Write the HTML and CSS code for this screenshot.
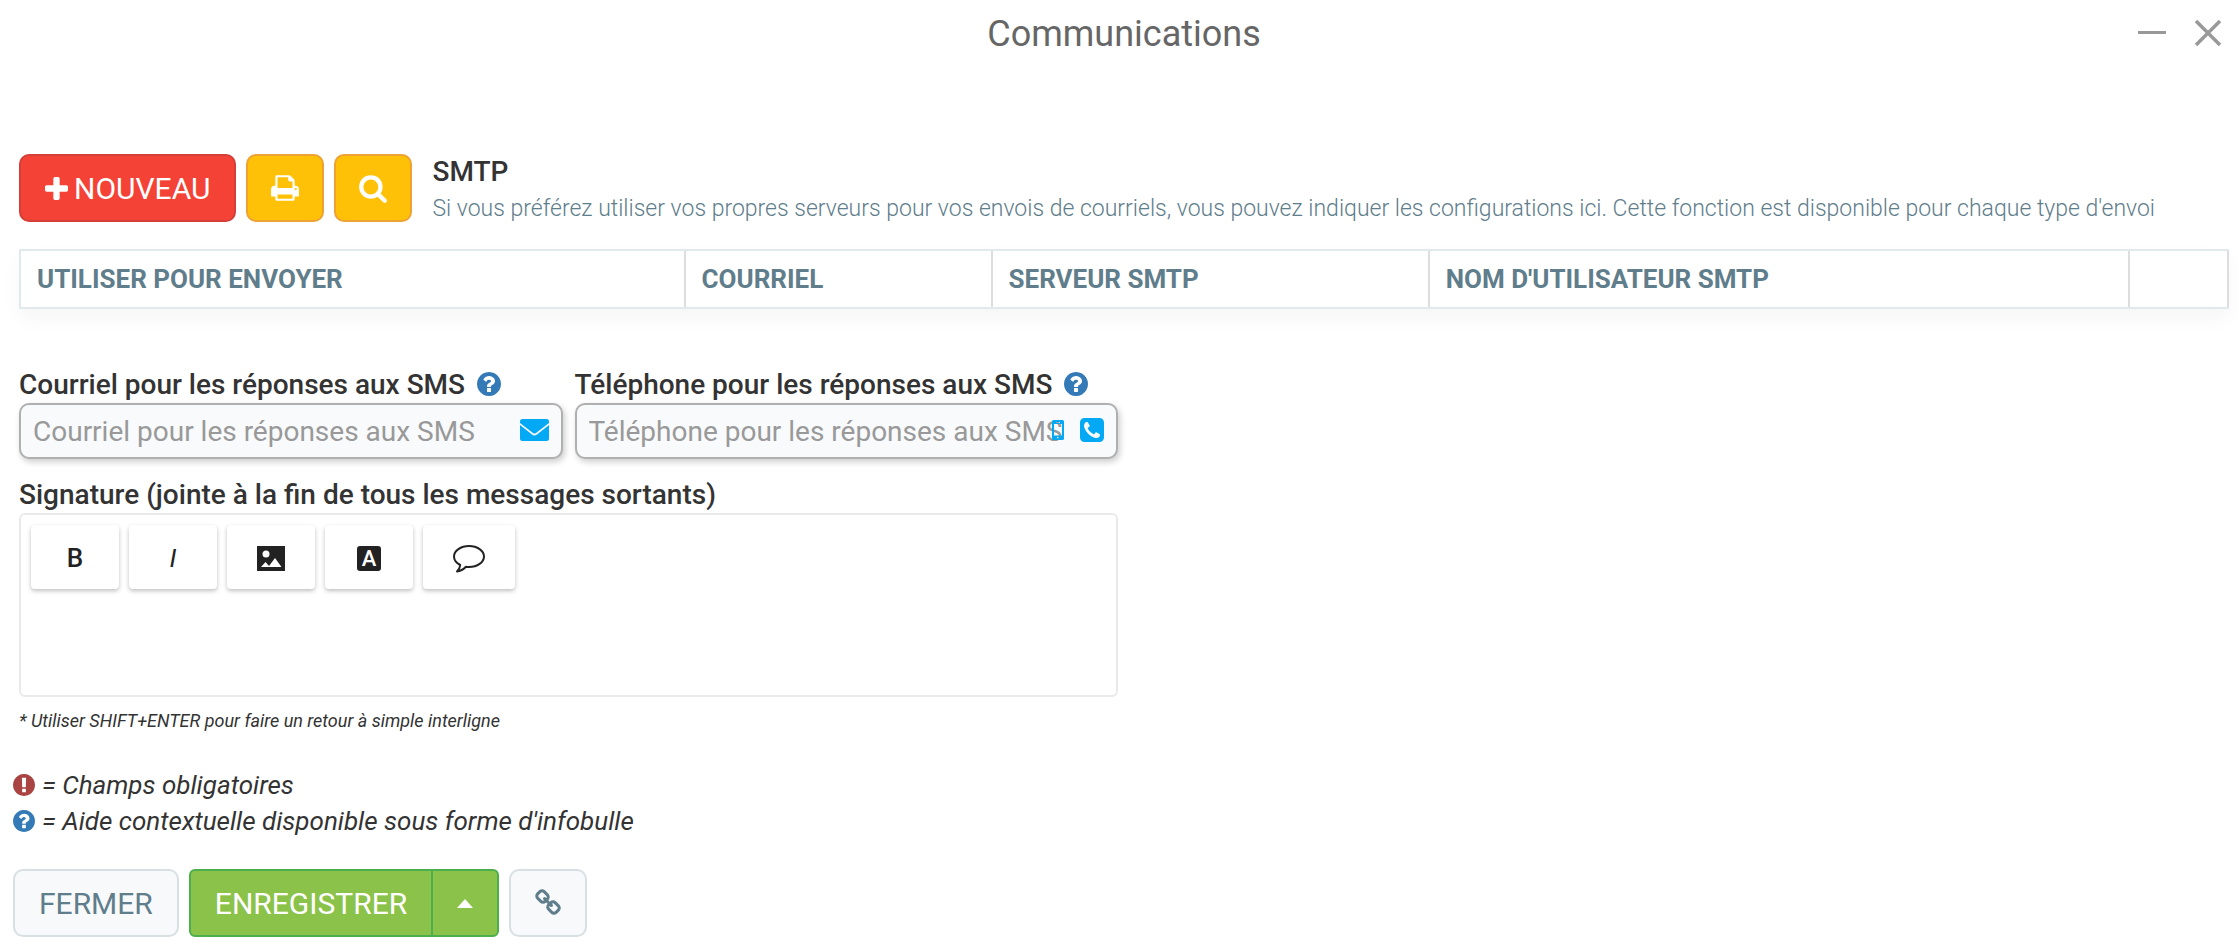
FILE: index.html
```
<!DOCTYPE html>
<html lang="fr">
<head>
  <meta charset="UTF-8">
  <meta name="viewport" content="width=device-width, initial-scale=1.0">
  <title>Communications</title>
  <link rel="stylesheet" href="styles.css">
</head>
<body>
  <svg class="sprite" aria-hidden="true">
    <symbol id="help" viewBox="128 128 1536 1536">
      <path d="M1024 1376v-192q0-14-9-23t-23-9h-192q-14 0-23 9t-9 23v192q0 14 9 23t23 9h192q14 0 23-9t9-23zm256-672q0-88-55.500-163t-138.500-116-170-41q-243 0-371 213-15 24 8 42l132 100q7 6 19 6 16 0 25-12 53-68 86-92 34-24 86-24 48 0 85.500 26t37.500 59q0 38-20 61t-68 45q-63 28-115.500 86.500t-52.500 125.500v36q0 14 9 23t23 9h192q14 0 23-9t9-23q0-19 21.500-49.500t54.500-49.500q32-18 49-28.500t46-35 44.500-48 28-60.500 12.500-81zm384 192q0 209-103 385.500t-279.500 279.500-385.500 103-385.500-103-279.500-279.500-103-385.500 103-385.500 279.500-279.500 385.500-103 385.500 103 279.500 279.500 103 385.500z"/>
    </symbol>
  </svg>

  <header class="titlebar">
    <h1>Communications</h1>
    <div class="window-actions">
      <button type="button" aria-label="Réduire"><svg width="28" height="28" viewBox="0 0 28 28"><path d="M0 12.500h28" stroke="currentColor" stroke-width="3"/></svg></button>
      <button type="button" aria-label="Fermer la fenêtre"><svg width="28" height="28" viewBox="0 0 28 28"><path d="M2 1l24 24M26 1L2 25" stroke="currentColor" stroke-width="3.500"/></svg></button>
    </div>
  </header>

  <main>
    <section class="smtp">
      <div class="smtp-head">
        <button type="button" class="btn btn-red">
          <svg width="23" height="23" viewBox="192 128 1408 1408"><path fill="currentColor" d="M1600 736v192q0 40-28 68t-68 28h-416v416q0 40-28 68t-68 28h-192q-40 0-68-28t-28-68v-416h-416q-40 0-68-28t-28-68v-192q0-40 28-68t68-28h416v-416q0-40 28-68t68-28h192q40 0 68 28t28 68v416h416q40 0 68 28t28 68z"/></svg>
          NOUVEAU
        </button>
        <button type="button" class="btn btn-icon btn-yellow" aria-label="Imprimer">
          <svg width="30" height="30" viewBox="0 0 1792 1792"><path fill="currentColor" d="M448 1536h896v-256h-896v256zm0-640h896v-384h-160q-40 0-68-28t-28-68v-160h-640v640zm1152 64q0-26-19-45t-45-19-45 19-19 45 19 45 45 19 45-19 19-45zm128 0v416q0 13-9.500 22.500t-22.500 9.500h-224v160q0 40-28 68t-68 28h-960q-40 0-68-28t-28-68v-160h-224q-13 0-22.500-9.500t-9.500-22.500v-416q0-79 56.500-135.500t135.500-56.500h64v-544q0-40 28-68t68-28h672q40 0 88 20t76 48l152 152q28 28 48 76t20 88v256h64q79 0 135.500 56.500t56.500 135.500z"/></svg>
        </button>
        <button type="button" class="btn btn-icon btn-yellow" aria-label="Rechercher">
          <svg width="30" height="30" viewBox="0 0 1792 1792"><path fill="currentColor" d="M1216 832q0-185-131.500-316.500t-316.500-131.500-316.500 131.500-131.500 316.500 131.500 316.500 316.500 131.500 316.500-131.500 131.500-316.500zm512 832q0 52-38 90t-90 38q-54 0-90-38l-343-342q-179 124-399 124-143 0-273.500-55.500t-225-150-150-225-55.500-273.500 55.500-273.500 150-225 225-150 273.500-55.500 273.500 55.500 225 150 150 225 55.500 273.500q0 220-124 399l343 343q37 37 37 90z"/></svg>
        </button>
        <div class="smtp-text">
          <h2>SMTP</h2>
          <p>Si vous préférez utiliser vos propres serveurs pour vos envois de courriels, vous pouvez indiquer les configurations ici. Cette fonction est disponible pour chaque type d'envoi</p>
        </div>
      </div>

      <table class="smtp-table">
        <thead>
          <tr>
            <th class="col-use">UTILISER POUR ENVOYER</th>
            <th class="col-mail">COURRIEL</th>
            <th class="col-server">SERVEUR SMTP</th>
            <th class="col-user">NOM D'UTILISATEUR SMTP</th>
            <th class="col-actions"></th>
          </tr>
        </thead>
      </table>
    </section>

    <section class="settings">
      <div class="fields">
        <div class="field">
          <label for="sms-email">Courriel pour les réponses aux SMS <svg class="help" width="24" height="24"><use href="#help"/></svg></label>
          <div class="input-wrap">
            <input type="email" id="sms-email" placeholder="Courriel pour les réponses aux SMS">
            <span class="input-icons">
              <svg width="29" height="22" viewBox="0 0 29 22"><path fill="currentColor" d="M2.500 0h24Q29 0 29 2.500V4L16 14q-1.500 1-3 0L0 4V2.500Q0 0 2.500 0zM0 6l12 9.500q2.500 1.800 5 0L29 6v13.500q0 2.500-2.500 2.500h-24Q0 22 0 19.500z"/></svg>
            </span>
          </div>
        </div>
        <div class="field">
          <label for="sms-phone">Téléphone pour les réponses aux SMS <svg class="help" width="24" height="24"><use href="#help"/></svg></label>
          <div class="input-wrap">
            <input type="tel" id="sms-phone" placeholder="Téléphone pour les réponses aux SMS">
            <span class="input-icons">
              <svg width="12" height="20" viewBox="0 0 12 20"><path fill="currentColor" fill-rule="evenodd" d="M1.500 0h9Q12 0 12 1.500v17q0 1.500-1.500 1.500h-9Q0 20 0 18.500v-17Q0 0 1.500 0zM2 4v11.500h8V4zM4 2v1h4V2zM5 17v1.500h2V17z"/></svg>
              <svg width="24" height="24" viewBox="128 128 1536 1536"><path fill="currentColor" d="M1408 1193q0-11-2-16t-18-16.500-40.500-25-47.500-26.500-45.500-25-28.500-15q-5-3-19-13t-25-15-21-5q-15 0-36.500 20.500t-39.500 45-38.500 45-33.500 20.500q-7 0-16.500-3.500t-15.500-6.500-17-9.500-14-8.500q-99-55-170-126.500t-127-170.500q-2-3-8.500-14t-9.500-17-6.500-15.500-3.500-16.500q0-13 20.500-33.500t45-38.500 45-39.500 20.500-36.500q0-10-5-21t-15-25-13-19q-3-6-15-28.500t-25-45.500-26.500-47.500-25-40.500-16.500-18-16-2q-48 0-101 22-46 21-80 94.500t-34 130.500q0 16 2.500 34t5 30.500 9 33 10 29.500 12.500 33 11 30q60 164 216.500 320.500t320.500 216.500q6 2 30 11t33 12.500 29.500 10 33 9 30.500 5 34 2.500q57 0 130.500-34t94.500-80q22-53 22-101zm256-777v960q0 119-84.500 203.500t-203.500 84.500h-960q-119 0-203.500-84.500t-84.500-203.500v-960q0-119 84.500-203.500t203.500-84.500h960q119 0 203.500 84.500t84.500 203.500z"/></svg>
            </span>
          </div>
        </div>
      </div>

      <label class="signature-label" for="signature">Signature (jointe à la fin de tous les messages sortants)</label>
      <div class="editor">
        <div class="toolbar">
          <button type="button" class="bold">B</button>
          <button type="button" class="italic">I</button>
          <button type="button" aria-label="Image"><svg width="28" height="25" viewBox="0 0 28 25"><path fill="currentColor" d="M0 0h28v25H0z"/><circle cx="9" cy="8" r="3.500" fill="#fff"/><path fill="#fff" d="M4 21l4.500-5 3.500 4 6-8 6.500 9z"/></svg></button>
          <button type="button" aria-label="Couleur"><span class="font-badge">A</span></button>
          <button type="button" class="wide" aria-label="Commentaire"><svg width="32" height="29" viewBox="0 0 32 29"><path fill="none" stroke="currentColor" stroke-width="2" stroke-linejoin="round" d="M16 2c8.300 0 15 4.700 15 10.500S24.300 23 16 23c-1 0-2 0-3-.2-2.500 2.600-5.500 4.400-9 4.700 1.800-1.700 3-4 3.200-6.500C3.500 19 1 16 1 12.500 1 6.700 7.700 2 16 2z"/></svg></button>
        </div>
        <textarea id="signature"></textarea>
      </div>
      <p class="hint">* Utiliser SHIFT+ENTER pour faire un retour à simple interligne</p>
    </section>
  </main>

  <footer>
    <p class="legend"><svg class="required" width="22" height="22" viewBox="128 128 1536 1536"><path d="M896 128q209 0 385.500 103t279.500 279.500 103 385.500-103 385.500-279.500 279.500-385.500 103-385.500-103-279.500-279.500-103-385.500 103-385.500 279.500-279.500 385.500-103zm128 1247v-190q0-14-9-23.500t-22-9.500h-192q-13 0-23 10t-10 23v190q0 13 10 23t23 10h192q13 0 22-9.500t9-23.500zm-2-344l18-621q0-12-10-18-10-8-24-8h-220q-14 0-24 8-10 6-10 18l17 621q0 10 10 17.500t24 7.500h185q14 0 23.500-7.500t10.500-17.500z"/></svg> = Champs obligatoires</p>
    <p class="legend"><svg class="help" width="22" height="22"><use href="#help"/></svg> = Aide contextuelle disponible sous forme d'infobulle</p>

    <div class="actions">
      <button type="button" class="btn btn-light">FERMER</button>
      <div class="btn-group">
        <button type="submit" class="btn btn-green">ENREGISTRER</button>
        <button type="button" class="btn btn-green btn-caret" aria-label="Plus d'options"><span class="caret"></span></button>
      </div>
      <button type="button" class="btn btn-icon btn-light" aria-label="Lien">
        <svg width="28" height="28" viewBox="0 0 1792 1792"><path fill="currentColor" d="M1520 1216q0-40-28-68l-208-208q-28-28-68-28-42 0-72 32 3 3 19 18.500t21.500 21.500 15 19 13 25.500 3.500 27.500q0 40-28 68t-68 28q-15 0-27.500-3.500t-25.500-13-19-15-21.500-21.500-18.500-19q-33 31-33 73 0 40 28 68l206 207q27 27 68 27 40 0 68-26l147-146q28-28 28-67zm-703-705q0-40-28-68l-206-207q-28-28-68-28-39 0-68 27l-147 146q-28 28-28 67 0 40 28 68l208 208q27 27 68 27 42 0 72-31-3-3-19-18.500t-21.500-21.500-15-19-13-25.500-3.500-27.500q0-40 28-68t68-28q15 0 27.500 3.500t25.500 13 19 15 21.500 21.500 18.500 19q33-31 33-73zm895 705q0 120-85 203l-147 146q-83 83-203 83-121 0-204-85l-206-207q-83-83-83-203 0-123 88-209l-88-88q-86 88-208 88-120 0-204-84l-208-208q-84-84-84-204t85-203l147-146q83-83 203-83 121 0 204 85l206 207q83 83 83 203 0 123-88 209l88 88q86-88 208-88 120 0 204 84l208 208q84 84 84 204z"/></svg>
      </button>
    </div>
  </footer>
</body>
</html>
```
FILE: styles.css
```
* {
  box-sizing: border-box;
}
body {
  margin: 0;
  font-family: Roboto, sans-serif;
  font-size: 26px;
  color: #333;
  background-color: #fff;
}
h1, h2, p {
  margin: 0;
}
button, input, textarea {
  font-family: inherit;
}
button {
  cursor: pointer;
}
.sprite {
  display: none;
}

/* title bar */
.titlebar {
  display: grid;
  grid-template-columns: 1fr auto 1fr;
  align-items: center;
  height: 68px;
  padding: 0 17px 0 26px;
}
.titlebar h1 {
  grid-column: 2;
  font-size: 36px;
  font-weight: 400;
  color: #666;
}
.window-actions {
  display: flex;
  justify-content: flex-end;
  gap: 28px;
}
.window-actions button {
  display: flex;
  padding: 0;
  border: 0;
  background: none;
  color: #999;
}

main {
  padding: 86px 10px 0 19px;
}

/* buttons */
.btn {
  display: flex;
  align-items: center;
  justify-content: center;
  gap: 6px;
  height: 68px;
  padding: 0 24px;
  border: 2px solid;
  border-radius: 10px;
  font-size: 30px;
  white-space: nowrap;
}
.btn-icon {
  width: 78px;
  padding: 0;
}
.btn-red {
  color: #fff;
  background-color: #f44336;
  border-color: #d43f3a;
}
.btn-yellow {
  color: #fff;
  background-color: #ffc107;
  border-color: #eea236;
}
.btn-green {
  color: #fff;
  background-color: #8bc34a;
  border-color: #4cae4c;
}
.btn-light {
  color: #607d8b;
  background-color: #f7f9fb;
  border-color: #d8e0e3;
}

/* smtp */
.smtp-head {
  display: flex;
  gap: 10px;
}
.smtp-text {
  padding-left: 10px;
}
.smtp-text h2 {
  font-size: 28px;
  font-weight: 500;
  line-height: 36px;
}
.smtp-text p {
  font-size: 23px;
  font-weight: 300;
  line-height: 38px;
  color: #607d8b;
}
.smtp-table {
  width: 100%;
  height: 60px;
  margin-top: 21px;
  table-layout: fixed;
  border-spacing: 0;
  border: 2px solid #e0eaed;
  border-right: 0;
  box-shadow: 0 10px 20px rgba(0, 0, 0, 0.04);
}
.smtp-table th {
  padding: 0 16px;
  border-right: 2px solid #ddd;
  font-size: 26px;
  font-weight: 700;
  text-align: left;
  color: #607d8b;
}
.col-use {
  width: 30.1%;
}
.col-mail {
  width: 13.9%;
}
.col-server {
  width: 19.8%;
}
.col-user {
  width: 31.7%;
}

/* settings */
.settings {
  width: 50%;
  margin-top: 56px;
  padding-right: 6px;
}
.fields {
  display: flex;
  gap: 12px;
}
.field {
  flex: 1;
}
.field label, .signature-label {
  display: flex;
  align-items: center;
  gap: 12px;
  height: 38px;
  font-size: 28px;
  font-weight: 500;
  white-space: nowrap;
}
.help {
  fill: #337ab7;
}
.required {
  fill: #a94442;
}
.input-wrap {
  position: relative;
}
.input-wrap input {
  display: block;
  width: 100%;
  height: 56px;
  padding: 0 12px;
  border: 2px solid #b0b0b0;
  border-radius: 10px;
  font-size: 28px;
  color: #333;
  background-color: #f8fafc;
  box-shadow: 2px 3px 6px rgba(0, 0, 0, 0.2);
}
.input-wrap input::placeholder {
  color: #999;
}
.input-icons {
  position: absolute;
  top: 0;
  right: 14px;
  display: flex;
  align-items: center;
  gap: 16px;
  height: 54px;
  color: #03a9f4;
}
.signature-label {
  margin-top: 16px;
}
.editor {
  display: flex;
  flex-direction: column;
  height: 184px;
  padding: 10px;
  border: 2px solid #eaeaea;
  border-radius: 6px;
}
.toolbar {
  display: flex;
  gap: 10px;
}
.toolbar button {
  display: flex;
  align-items: center;
  justify-content: center;
  width: 88px;
  height: 64px;
  padding: 2px 0 0;
  border: 0;
  border-radius: 4px;
  font-size: 26px;
  color: #222;
  background-color: #fff;
  box-shadow: 0 2px 4px rgba(0, 0, 0, 0.25);
}
.toolbar .bold {
  font-weight: 500;
}
.toolbar .italic {
  font-style: italic;
}
.toolbar .wide {
  width: 92px;
}
.font-badge {
  width: 24px;
  border-radius: 3px;
  font-size: 22px;
  font-weight: 500;
  line-height: 25px;
  color: #fff;
  background-color: #222;
}
.editor textarea {
  flex: 1;
  min-height: 0;
  border: 0;
  outline: 0;
  resize: none;
  font-size: 26px;
  background: none;
}
.hint {
  margin-top: 12px;
  font-size: 18px;
  font-style: italic;
  line-height: 24px;
}

/* footer */
footer {
  padding: 34px 13px 12px;
}
.legend {
  display: flex;
  align-items: center;
  gap: 7px;
  font-size: 26px;
  font-style: italic;
  line-height: 36px;
}
.actions {
  display: flex;
  gap: 10px;
  margin-top: 30px;
}
.btn-group {
  display: flex;
}
.btn-group .btn:first-child {
  border-radius: 6px 0 0 6px;
}
.btn-group .btn-caret {
  width: 68px;
  margin-left: -2px;
  border-radius: 0 6px 6px 0;
}
.caret {
  border-right: 8px solid transparent;
  border-bottom: 9px solid #fff;
  border-left: 8px solid transparent;
}
```
